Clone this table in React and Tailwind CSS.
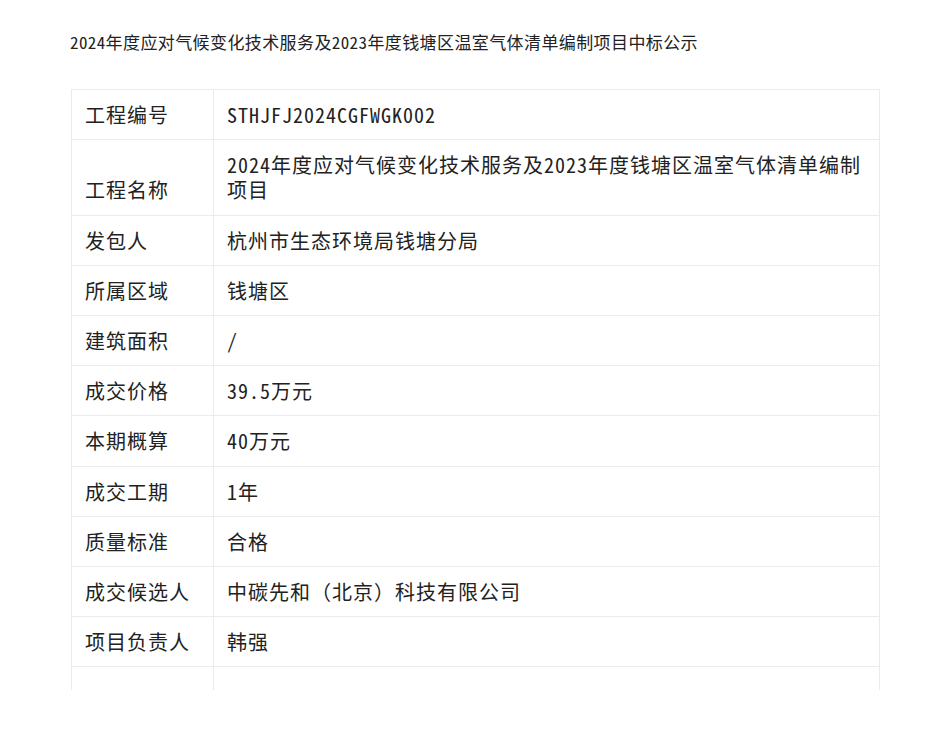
const rows = [
  ["工程编号", "STHJFJ2024CGFWGK002"],
  ["工程名称", "2024年度应对气候变化技术服务及2023年度钱塘区温室气体清单编制项目"],
  ["发包人", "杭州市生态环境局钱塘分局"],
  ["所属区域", "钱塘区"],
  ["建筑面积", "/"],
  ["成交价格", "39.5万元"],
  ["本期概算", "40万元"],
  ["成交工期", "1年"],
  ["质量标准", "合格"],
  ["成交候选人", "中碳先和（北京）科技有限公司"],
  ["项目负责人", "韩强"],
  ["", ""],
];

export default function App() {
  return (
    <div
      className="h-[736px] bg-white text-[#222] font-light overflow-hidden"
      style={{ fontFamily: '"Noto Sans Mono CJK SC", "Noto Sans CJK SC", monospace' }}
    >
      <div className="h-[690px] overflow-hidden">
        <h1 className="pl-[70px] pt-[31px] text-[17px] leading-[22px] tracking-[0.4px] font-light">
          2024年度应对气候变化技术服务及2023年度钱塘区温室气体清单编制项目中标公示
        </h1>
        <div className="ml-[71px] mt-[36px] w-[809px] border-t border-l border-r border-[#ebebeb]">
          {rows.map(([label, value], i) => (
            <div key={i} className="flex border-b border-[#ebebeb] text-[20px] leading-[25.2px] tracking-[1px]">
              <div className="w-[142px] shrink-0 border-r border-[#ebebeb] px-[13px] py-3 flex items-end">
                {label}
              </div>
              <div className="flex-1 px-[13px] py-3 min-h-[49px]">{value}</div>
            </div>
          ))}
        </div>
      </div>
    </div>
  );
}
